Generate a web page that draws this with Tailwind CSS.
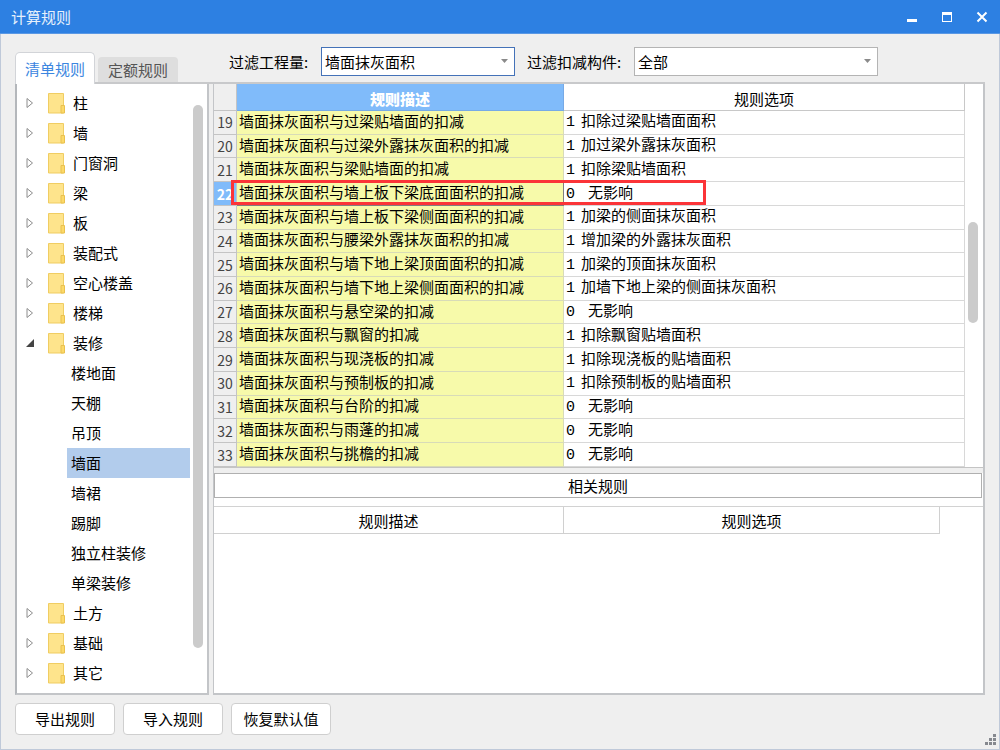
<!DOCTYPE html>
<html lang="zh-CN">
<head>
<meta charset="utf-8">
<title>计算规则</title>
<script src="https://cdn.jsdelivr.net/npm/@tailwindcss/browser@4"></script>
</head>
<body class="bg-[#efefef] font-['Noto_Sans_CJK_SC',sans-serif] text-[15px] leading-5 text-black">
<div class="flex min-h-screen flex-col">
  <header class="flex h-[34px] items-center justify-between border-b border-[#5a98e4] bg-[#2d80e2] pl-[11px] pr-3 text-white">
    <h1 class="text-[#e6f0fc]">计算规则</h1>
    <div class="flex items-center gap-[23px]">
      <button aria-label="最小化" class="block"><svg class="block size-3" viewBox="0 0 12 12"><path d="M1 8h10v3H1z" fill="#fff"/></svg></button>
      <button aria-label="最大化" class="block"><svg class="block size-3" viewBox="0 0 12 12"><path d="M1 1h10v10H1zM2 4v6h8V4z" fill="#fff" fill-rule="evenodd"/></svg></button>
      <button aria-label="关闭" class="block"><svg class="block size-3" viewBox="0 0 12 12"><path d="M1.500 1.500l9 9M10.500 1.500l-9 9" stroke="#fff" stroke-width="2"/></svg></button>
    </div>
  </header>

  <div class="flex flex-1 flex-col border-x border-b border-[#bfc9d9] pl-[14px] pr-[14px]">
    <div class="flex h-[50px] shrink-0 border-b-2 border-[#c8c9cb]">
      <div role="tablist" class="flex w-[210px] shrink-0 items-end gap-[3px]">
        <button role="tab" aria-selected="true" class="-mb-[2px] h-8 w-20 rounded-t-[5px] border border-b-0 border-[#d2d4d8] bg-white text-[#3b86e0]">清单规则</button>
        <button role="tab" aria-selected="false" class="h-[25px] w-20 rounded-t-[4px] bg-[#dedede] text-[#555]">定额规则</button>
      </div>
      <div class="flex flex-1 items-center pt-[7px] pl-[4px]">
        <label for="quantity" class="w-[92px] shrink-0">过滤工程量:</label>
        <div class="relative">
          <select id="quantity" class="block h-[29px] w-[194px] appearance-none border border-[#4472b8] bg-white pl-[3px] outline-none"><option>墙面抹灰面积</option></select>
          <svg class="pointer-events-none absolute right-[7px] top-[12px] h-[5px] w-[7px]" viewBox="0 0 7 5"><path d="M0 0h7L3.500 4z" fill="#8a8a8a"/></svg>
        </div>
        <label for="member" class="ml-3 w-[107px] shrink-0">过滤扣减构件:</label>
        <div class="relative">
          <select id="member" class="block h-[29px] w-[244px] appearance-none border border-[#b4b4b4] bg-white pl-[3px] outline-none"><option>全部</option></select>
          <svg class="pointer-events-none absolute right-[7px] top-[12px] h-[5px] w-[7px]" viewBox="0 0 7 5"><path d="M0 0h7L3.500 4z" fill="#8a8a8a"/></svg>
        </div>
      </div>
    </div>

    <main class="flex flex-1 gap-1">
      <nav class="flex w-[194px] shrink-0 border-2 border-t-0 border-[#c3c5c8] border-l-[#b4b7bb] bg-white pt-1">
        <ul id="tree" role="tree" class="flex-1"></ul>
        <div class="mt-[17px] ml-[3px] mr-[4px] h-[543px] w-[10px] rounded-full bg-[#cbcbcb]"></div>
      </nav>

      <section class="flex flex-1 flex-col border-b-2 border-r-2 border-l border-[#c3c5c8] bg-white">
        <div class="flex border-b border-[#c4c4c4]">
          <table class="h-[383px] flex-1 table-fixed border-separate border-spacing-0">
            <colgroup><col class="w-[23px]"><col class="w-[327px]"><col></colgroup>
            <thead>
              <tr class="h-[27px]">
                <th class="border-b border-r border-[#c4c4c4] bg-[#efefef] p-0"></th>
                <th class="border-b border-r border-[#77aae6] bg-[#80bbfa] p-0 pt-[3px] font-black text-white">规则描述</th>
                <th class="border-b border-r border-[#c8c8c8] p-0 pt-[3px] font-normal">规则选项</th>
              </tr>
            </thead>
            <tbody id="rules"></tbody>
          </table>
          <div class="w-[18px] pl-[3px] pt-[138px]"><div class="h-[101px] w-[10px] rounded-full bg-[#cbcbcb]"></div></div>
        </div>
        <div class="h-[5px] shrink-0 bg-[#efefef]"></div>
        <h2 class="mr-px flex h-[25px] items-center justify-center border border-[#b0b0b0]">相关规则</h2>
        <div class="mt-2 border-t border-[#d2d2d2] pr-[43px]">
          <table class="w-full table-fixed border-separate border-spacing-0">
            <colgroup><col class="w-[350px]"><col></colgroup>
            <thead>
              <tr class="h-[27px]">
                <th class="border-b border-r border-[#d0d0d0] p-0 pt-[2px] font-normal">规则描述</th>
                <th class="border-b border-r border-[#d0d0d0] p-0 pt-[2px] font-normal">规则选项</th>
              </tr>
            </thead>
          </table>
        </div>
      </section>
    </main>

    <footer class="flex h-[54px] shrink-0 items-start justify-between pt-2">
      <div class="flex gap-2">
        <button class="h-8 w-[100px] rounded-[4px] border border-[#cfcfcf] bg-white">导出规则</button>
        <button class="h-8 w-[100px] rounded-[4px] border border-[#cfcfcf] bg-white">导入规则</button>
        <button class="h-8 w-[100px] rounded-[4px] border border-[#cfcfcf] bg-white">恢复默认值</button>
      </div>
      <svg class="-mr-[11px] mb-1 size-[11px] self-end" viewBox="0 0 11 11" fill="#85888e"><path d="M8 0h3v3H8zM4 4h3v3H4zM8 4h3v3H8zM0 8h3v3H0zM4 8h3v3H4zM8 8h3v3H8z"/></svg>
    </footer>
  </div>
</div>

<script>
const folder = '<svg class="ml-[14px] mr-[8px] h-[21px] w-[17px]" viewBox="0 0 17 21"><path d="M.5.5h15v19.500H.5z" fill="#fee48c" stroke="#f0cd62"/><path d="M13 12.500h3.500V20H13z" fill="#fbd968" stroke="#eac04e"/></svg>';
const closed = '<svg class="ml-[9px] h-[12px] w-[8px]" viewBox="0 0 8 12"><path d="M1 1.500v9L6.500 6z" fill="none" stroke="#8c8c8c"/></svg>';
const open = '<svg class="ml-[9px] h-[12px] w-[8px]" viewBox="0 0 8 12"><path d="M8 2v8H0z" fill="#444"/></svg>';
const parent = (name, icon) => `<li role="treeitem" class="flex h-[30px] items-center">${icon}${folder}<span>${name}</span></li>`;
const child = name => name === '墙面'
  ? `<li role="treeitem" aria-selected="true" class="ml-[50px] flex h-[30px] items-center bg-[#b2ccec] pl-1">${name}</li>`
  : `<li role="treeitem" class="ml-[50px] flex h-[30px] items-center pl-1">${name}</li>`;
document.getElementById('tree').innerHTML =
  ['柱','墙','门窗洞','梁','板','装配式','空心楼盖','楼梯'].map(n => parent(n, closed)).join('') +
  parent('装修', open) +
  ['楼地面','天棚','吊顶','墙面','墙裙','踢脚','独立柱装修','单梁装修'].map(child).join('') +
  ['土方','基础','其它'].map(n => parent(n, closed)).join('');

const rules = [
  ['过梁贴墙面', 1, '扣除过梁贴墙面面积'],
  ['过梁外露抹灰面积', 1, '加过梁外露抹灰面积'],
  ['梁贴墙面', 1, '扣除梁贴墙面积'],
  ['墙上板下梁底面面积', 0, '无影响'],
  ['墙上板下梁侧面面积', 1, '加梁的侧面抹灰面积'],
  ['腰梁外露抹灰面积', 1, '增加梁的外露抹灰面积'],
  ['墙下地上梁顶面面积', 1, '加梁的顶面抹灰面积'],
  ['墙下地上梁侧面面积', 1, '加墙下地上梁的侧面抹灰面积'],
  ['悬空梁', 0, '无影响'],
  ['飘窗', 1, '扣除飘窗贴墙面积'],
  ['现浇板', 1, '扣除现浇板的贴墙面积'],
  ['预制板', 1, '扣除预制板的贴墙面积'],
  ['台阶', 0, '无影响'],
  ['雨蓬', 0, '无影响'],
  ['挑檐', 0, '无影响'],
];
document.getElementById('rules').innerHTML = rules.map(([part, code, text], i) => {
  const current = i === 3;
  const head = current ? 'bg-[#80bbfa] font-bold text-white' : 'bg-[#efefef] font-normal text-[#444]';
  const desc = current ? 'border-[#808080]' : 'border-[#d8dbb8]';
  const mark = current ? '<div class="pointer-events-none absolute -top-[2px] left-[17px] h-[25px] w-[475px] border-3 border-[#fb3438]"></div>' : '';
  const gap = code ? 'ml-[5px]' : 'ml-[12px]';
  return `<tr class="relative">
    <th class="border-b border-r border-[#c4c4c4] p-0 text-[14px] leading-4 ${head}">${i + 19}</th>
    <td class="border-b border-r bg-[#f7faaa] p-0 pb-[3px] pl-[2px] leading-4 ${desc}">墙面抹灰面积与${part}的扣减</td>
    <td class="border-b border-r border-[#d8d8d8] p-0 pb-px pl-[2px] leading-4"><div class="flex items-baseline"><span class="w-[10px] font-['Liberation_Mono',monospace]">${code}</span><span class="${gap}">${text}</span></div>${mark}</td>
  </tr>`;
}).join('');
</script>
</body>
</html>
